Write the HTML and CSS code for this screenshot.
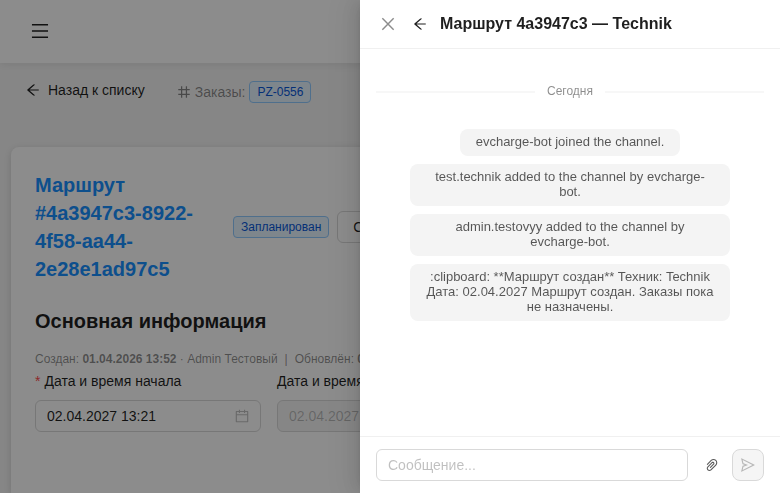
FILE: index.html
```
<!DOCTYPE html>
<html lang="ru">
<head>
    <meta charset="UTF-8">
    <meta name="viewport" content="width=device-width, initial-scale=1">
    <title>Маршрут 4a3947c3</title>
    <link rel="stylesheet" href="styles.css">
</head>
<body>
    <svg class="sprite" aria-hidden="true">
        <symbol id="arrow-left" viewBox="64 64 896 896"><path d="M872 474H286.9l350.2-304c5.6-4.9 2.2-14-5.2-14h-88.5c-3.9 0-7.6 1.4-10.5 3.9L155 487.8a31.96 31.96 0 000 48.3L535.1 866c1.5 1.3 3.3 2 5.2 2h91.5c7.4 0 10.8-9.2 5.2-14L286.9 550H872c4.4 0 8-3.6 8-8v-60c0-4.4-3.6-8-8-8z"/></symbol>
    </svg>

    <header class="topbar">
        <button class="menu-btn" aria-label="Меню">
            <svg class="icon icon-lg" viewBox="64 64 896 896"><path d="M112 160h800v80H112zM112 472h800v80H112zM112 784h800v80H112z"/></svg>
        </button>
    </header>

    <main class="content">
        <div class="toolbar">
            <button class="back-btn">
                <svg class="icon"><use href="#arrow-left"/></svg>
                Назад к списку
            </button>
            <div class="orders">
                <svg class="icon" viewBox="64 64 896 896"><path d="M872 394c4.4 0 8-3.6 8-8v-60c0-4.4-3.6-8-8-8H708V152c0-4.4-3.6-8-8-8h-64c-4.4 0-8 3.6-8 8v166H400V152c0-4.4-3.6-8-8-8h-64c-4.4 0-8 3.6-8 8v166H152c-4.4 0-8 3.6-8 8v60c0 4.4 3.6 8 8 8h168v236H152c-4.4 0-8 3.6-8 8v60c0 4.4 3.6 8 8 8h168v166c0 4.4 3.6 8 8 8h64c4.4 0 8-3.6 8-8V706h228v166c0 4.4 3.6 8 8 8h64c4.4 0 8-3.6 8-8V706h164c4.4 0 8-3.6 8-8v-60c0-4.4-3.6-8-8-8H708V394h164zM628 630H400V394h228v236z"/></svg>
                <span>Заказы:</span>
                <a class="tag" href="#">PZ-0556</a>
            </div>
        </div>

        <section class="card">
            <div class="card-head">
                <h1>Маршрут #4a3947c3-8922-4f58-aa44-2e28e1ad97c5</h1>
                <span class="tag">Запланирован</span>
                <button class="action-btn">С</button>
            </div>

            <h2>Основная информация</h2>
            <p class="meta">Создан: <b>01.04.2026 13:52</b> · Admin Тестовый<span class="sep">|</span>Обновлён: <b>0</b></p>

            <form class="fields">
                <div class="field">
                    <label class="required" for="start">Дата и время начала</label>
                    <div class="picker">
                        <input id="start" type="text" value="02.04.2027 13:21">
                        <svg class="icon" viewBox="64 64 896 896"><path d="M880 184H712v-64c0-4.4-3.6-8-8-8h-56c-4.4 0-8 3.6-8 8v64H384v-64c0-4.4-3.6-8-8-8h-56c-4.4 0-8 3.6-8 8v64H144c-17.7 0-32 14.3-32 32v664c0 17.7 14.3 32 32 32h736c17.7 0 32-14.3 32-32V216c0-17.7-14.3-32-32-32zm-40 656H184V460h656v380zM184 392V256h128v48c0 4.4 3.6 8 8 8h56c4.4 0 8-3.6 8-8v-48h256v48c0 4.4 3.6 8 8 8h56c4.4 0 8-3.6 8-8v-48h128v136H184z"/></svg>
                    </div>
                </div>
                <div class="field">
                    <label for="end">Дата и время</label>
                    <div class="picker disabled">
                        <input id="end" type="text" value="02.04.2027" disabled>
                    </div>
                </div>
            </form>
        </section>
    </main>

    <div class="mask"></div>

    <aside class="drawer" role="dialog" aria-labelledby="chat-title">
        <div class="drawer-head">
            <button class="icon-btn close" aria-label="Закрыть">
                <svg class="icon icon-md" viewBox="64 64 896 896"><path d="M195 195l634 634M829 195L195 829" fill="none" stroke="currentColor" stroke-width="82"/></svg>
            </button>
            <button class="icon-btn" aria-label="Назад">
                <svg class="icon"><use href="#arrow-left"/></svg>
            </button>
            <h3 id="chat-title">Маршрут 4a3947c3 — Technik</h3>
        </div>

        <div class="messages">
            <div class="day">Сегодня</div>
            <div class="message">evcharge-bot joined the channel.</div>
            <div class="message">test.technik added to the channel by evcharge-bot.</div>
            <div class="message">admin.testovyy added to the channel by evcharge-bot.</div>
            <div class="message">:clipboard: **Маршрут создан** Техник: Technik Дата: 02.04.2027 Маршрут создан. Заказы пока не назначены.</div>
        </div>

        <form class="composer">
            <input type="text" placeholder="Сообщение..." aria-label="Сообщение">
            <button class="attach" type="button" aria-label="Прикрепить файл">
                <svg class="icon" viewBox="64 64 896 896"><path d="M779.3 196.6c-94.2-94.2-247.6-94.2-341.7 0l-261 260.8c-1.7 1.7-2.6 4-2.6 6.4s.9 4.7 2.6 6.4l36.9 36.9a9 9 0 0012.7 0l261-260.8c32.4-32.4 75.5-50.2 121.3-50.2s88.9 17.8 121.2 50.2c32.4 32.4 50.2 75.5 50.2 121.2 0 45.8-17.8 88.8-50.2 121.2l-266 265.9-43.1 43.1c-40.3 40.3-105.8 40.3-146.1 0-19.5-19.5-30.2-45.4-30.2-73s10.7-53.5 30.2-73l263.9-263.8c6.7-6.6 15.5-10.3 24.9-10.3h.1c9.4 0 18.1 3.7 24.7 10.3 6.7 6.7 10.3 15.5 10.3 24.9 0 9.3-3.7 18.1-10.3 24.7L372.4 653c-1.7 1.7-2.6 4-2.6 6.4s.9 4.7 2.6 6.4l36.9 36.9a9 9 0 0012.7 0l215.6-215.6c19.9-19.9 30.8-46.3 30.8-74.4s-11-54.6-30.8-74.4c-41.1-41.1-107.9-41-149 0L463 364 224.8 602.1A172.22 172.22 0 00174 724.8c0 46.3 18.1 89.8 50.8 122.5 33.9 33.8 78.3 50.7 122.7 50.7 44.4 0 88.8-16.9 122.6-50.7l309.2-309C824.8 492.7 850 432 850 367.5c.1-64.6-25.1-125.3-70.7-170.9z"/></svg>
            </button>
            <button class="send" type="submit" aria-label="Отправить" disabled>
                <svg class="icon" viewBox="64 64 896 896"><path d="M931.4 498.9L94.9 79.5c-3.4-1.7-7.3-2.1-11-1.2a15.99 15.99 0 00-11.7 19.3l86.2 352.2c1.3 5.3 5.2 9.6 10.4 11.3l147.7 50.7-147.6 50.7c-5.2 1.8-9.1 6-10.3 11.3L72.2 926.5c-.9 3.7-.5 7.6 1.2 10.9 3.9 7.9 13.5 11.1 21.5 7.2l836.5-417c3.1-1.5 5.6-4.1 7.2-7.1 3.9-8 .7-17.6-7.2-21.6zM170.8 826.3l50.3-205.6 295.2-101.3c2.3-.8 4.2-2.6 5-5 1.4-4.2-.8-8.7-5-10.2L221.1 403 171 198.2l628 314.9-628.2 313.2z"/></svg>
            </button>
        </form>
    </aside>
</body>
</html>
```
FILE: styles.css
```
* {
    box-sizing: border-box;
}
body {
    margin: 0;
    height: 100vh;
    overflow: hidden;
    display: flex;
    flex-direction: column;
    background-color: #f5f5f5;
    color: rgba(0, 0, 0, 0.88);
    font-family: "Liberation Sans", Arial, sans-serif;
    font-size: 14px;
    line-height: 22px;
}
h1, h2, h3, p {
    margin: 0;
}
button, input {
    font: inherit;
    color: inherit;
}
button {
    display: inline-flex;
    align-items: center;
    justify-content: center;
    padding: 0;
    border: none;
    background: none;
    cursor: pointer;
}
.sprite {
    display: none;
}
.icon {
    width: 14px;
    height: 14px;
    fill: currentColor;
    flex: none;
}
.icon-md {
    width: 16px;
    height: 16px;
}
.icon-lg {
    width: 18px;
    height: 18px;
}

/* page */
.topbar {
    flex: none;
    display: flex;
    padding: 15px 24px 16px;
    background-color: #fff;
    box-shadow: 0 2px 8px rgba(0, 0, 0, 0.08);
}
.menu-btn {
    width: 32px;
    height: 32px;
}
.content {
    flex: 1;
    display: flex;
    flex-direction: column;
    padding: 11px 11px 0;
}
.toolbar {
    display: flex;
    align-items: flex-start;
    gap: 17px;
    margin-bottom: 37px;
}
.back-btn {
    gap: 8px;
    height: 32px;
    padding: 0 15px;
}
.orders {
    display: flex;
    align-items: center;
    gap: 4px;
    height: 36px;
    color: rgba(0, 0, 0, 0.45);
}
.tag {
    flex: none;
    padding: 0 7px;
    border: 1px solid #91caff;
    border-radius: 4px;
    background-color: #e6f4ff;
    color: #0958d9;
    font-size: 12px;
    line-height: 20px;
    text-decoration: none;
}
.card {
    flex: 1;
    padding: 24px;
    border-radius: 8px 8px 0 0;
    background-color: #fff;
    box-shadow: 0 2px 8px rgba(0, 0, 0, 0.15);
}
.card-head {
    display: flex;
    align-items: center;
    gap: 8px;
    margin-bottom: 24px;
}
h1 {
    width: 182px;
    margin-right: 8px;
    color: #1890ff;
    font-size: 20px;
    line-height: 28px;
}
h2 {
    font-size: 20px;
    line-height: 28px;
}
.action-btn {
    height: 32px;
    min-width: 120px;
    padding: 0 15px;
    justify-content: flex-start;
    border: 1px solid #d9d9d9;
    border-radius: 6px;
}
.meta {
    margin-top: 14px;
    color: rgba(0, 0, 0, 0.45);
    font-size: 12px;
    line-height: 21px;
    white-space: nowrap;
}
.sep {
    margin: 0 7px;
}
.fields {
    display: grid;
    grid-template-columns: repeat(3, 1fr);
    gap: 16px;
}
.field {
    display: flex;
    flex-direction: column;
    gap: 8px;
}
.required::before {
    content: "*";
    margin-right: 4px;
    color: #ff4d4f;
}
.picker {
    display: flex;
    align-items: center;
    height: 32px;
    padding: 0 11px;
    border: 1px solid #d9d9d9;
    border-radius: 6px;
    color: rgba(0, 0, 0, 0.25);
}
.picker input {
    flex: 1;
    min-width: 0;
    padding: 0;
    border: none;
    background: none;
    color: rgba(0, 0, 0, 0.88);
}
.picker.disabled {
    background-color: rgba(0, 0, 0, 0.04);
}
.picker.disabled input {
    color: rgba(0, 0, 0, 0.25);
}

/* drawer */
.mask {
    position: fixed;
    inset: 0;
    background-color: rgba(0, 0, 0, 0.45);
}
.drawer {
    position: fixed;
    top: 0;
    right: 0;
    bottom: 0;
    width: 420px;
    max-width: 100%;
    display: flex;
    flex-direction: column;
    background-color: #fff;
    box-shadow: -6px 0 16px 0 rgba(0, 0, 0, 0.08), -3px 0 6px -4px rgba(0, 0, 0, 0.12), -9px 0 28px 8px rgba(0, 0, 0, 0.05);
}
.drawer-head {
    display: flex;
    align-items: center;
    gap: 8px;
    padding: 12px 16px;
    border-bottom: 1px solid #f0f0f0;
}
.drawer-head h3 {
    font-size: 16px;
    line-height: 24px;
}
.icon-btn {
    width: 24px;
    height: 24px;
}
.close {
    color: rgba(0, 0, 0, 0.45);
}
.messages {
    flex: 1;
    display: flex;
    flex-direction: column;
    align-items: center;
    gap: 8px;
    padding: 16px;
    overflow-y: auto;
}
.day {
    align-self: stretch;
    display: flex;
    align-items: center;
    gap: 12px;
    margin: 15px 0 19px;
    color: rgba(0, 0, 0, 0.45);
    font-size: 12px;
}
.day::before, .day::after {
    content: "";
    flex: 1;
    height: 2px;
    margin-top: 2px;
    background-color: #f7f7f7;
}
.message {
    max-width: 320px;
    padding: 5px 16px 7px;
    border-radius: 8px;
    background-color: #f4f4f4;
    color: rgba(0, 0, 0, 0.65);
    font-size: 13px;
    line-height: 15px;
    text-align: center;
}
.composer {
    display: flex;
    gap: 4px;
    padding: 12px 16px;
    border-top: 1px solid #f0f0f0;
}
.composer input {
    flex: 1;
    min-width: 0;
    height: 32px;
    margin-right: 4px;
    padding: 0 11px;
    border: 1px solid #d9d9d9;
    border-radius: 6px;
}
.composer input::placeholder {
    color: rgba(0, 0, 0, 0.25);
}
.attach, .send {
    width: 32px;
    height: 32px;
}
.attach {
    color: rgba(0, 0, 0, 0.65);
}
.send {
    border: 1px solid #d9d9d9;
    border-radius: 8px;
    background-color: #f5f5f5;
    color: rgba(0, 0, 0, 0.25);
}
```
